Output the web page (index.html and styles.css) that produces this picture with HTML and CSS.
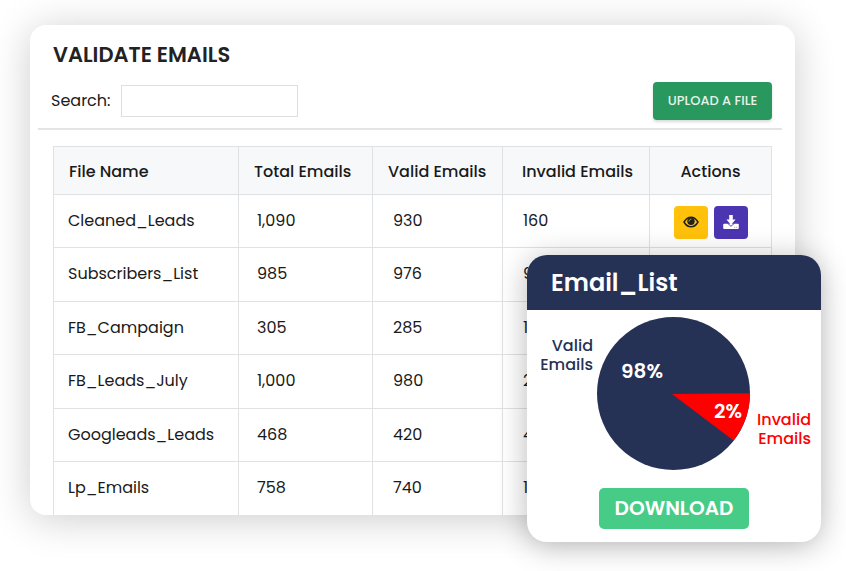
FILE: index.html
```html
<!DOCTYPE html>
<html lang="en">
<head>
    <meta charset="UTF-8">
    <meta name="viewport" content="width=device-width, initial-scale=1.0">
    <title>Validate Emails</title>
    <link rel="stylesheet" href="styles.css">
</head>
<body>
    <div class="dashboard">
        <main class="card">
            <div class="card-header">
                <h1>VALIDATE EMAILS</h1>
                <div class="toolbar">
                    <label for="search">Search:</label>
                    <input type="text" id="search" class="search-input">
                    <button class="upload-button">UPLOAD A FILE</button>
                </div>
            </div>

            <table class="email-table">
                <colgroup>
                    <col class="col-name">
                    <col class="col-total">
                    <col class="col-valid">
                    <col class="col-invalid">
                    <col>
                </colgroup>
                <thead>
                    <tr>
                        <th>File Name</th>
                        <th>Total Emails</th>
                        <th>Valid Emails</th>
                        <th>Invalid Emails</th>
                        <th>Actions</th>
                    </tr>
                </thead>
                <tbody>
                    <tr>
                        <td>Cleaned_Leads</td>
                        <td>1,090</td>
                        <td>930</td>
                        <td>160</td>
                        <td>
                            <div class="actions">
                                <button class="icon-button view-button" aria-label="View">
                                    <svg width="16" height="12" viewBox="0 0 16 12">
                                        <path d="M1 6C3 2.6 5.400 1.200 8 1.200S13 2.600 15 6C13 9.400 10.600 10.800 8 10.800S3 9.400 1 6Z" fill="none" stroke="#212121" stroke-width="1.500"/>
                                        <circle cx="8" cy="5.300" r="3.700" fill="#212121"/>
                                        <path d="M6 5.200C6 4.100 6.900 3.200 8 3.200" fill="none" stroke="#ffc10a" stroke-width="0.800" stroke-linecap="round"/>
                                    </svg>
                                </button>
                                <button class="icon-button save-button" aria-label="Download">
                                    <svg width="16" height="14" viewBox="0 0 16 14">
                                        <path d="M1.200 8.800H14.800Q15.800 8.800 15.800 9.800V13Q15.800 14 14.800 14H1.200Q0.200 14 0.200 13V9.800Q0.200 8.800 1.200 8.800Z" fill="#fff"/>
                                        <path d="M6.200 0H9.800V4.500H12.600L8 9.800L3.400 4.500H6.200Z" fill="#fff"/>
                                        <path d="M4.600 8.300L8 11.300L11.400 8.300" fill="none" stroke="#4c35b0" stroke-width="0.900"/>
                                        <path d="M11.400 12.300H12.200M13.400 12.300H14.200" stroke="#4c35b0" stroke-width="0.700"/>
                                    </svg>
                                </button>
                            </div>
                        </td>
                    </tr>
                    <tr>
                        <td>Subscribers_List</td>
                        <td>985</td>
                        <td>976</td>
                        <td>9</td>
                        <td></td>
                    </tr>
                    <tr>
                        <td>FB_Campaign</td>
                        <td>305</td>
                        <td>285</td>
                        <td>1</td>
                        <td></td>
                    </tr>
                    <tr>
                        <td>FB_Leads_July</td>
                        <td>1,000</td>
                        <td>980</td>
                        <td>2</td>
                        <td></td>
                    </tr>
                    <tr>
                        <td>Googleads_Leads</td>
                        <td>468</td>
                        <td>420</td>
                        <td>4</td>
                        <td></td>
                    </tr>
                    <tr>
                        <td>Lp_Emails</td>
                        <td>758</td>
                        <td>740</td>
                        <td>1</td>
                        <td></td>
                    </tr>
                </tbody>
            </table>
        </main>

        <!-- Result popup over the table -->
        <section class="popup">
            <h2>Email_List</h2>
            <div class="chart">
                <div class="chart-label valid-label">Valid Emails</div>
                <svg class="pie" width="153" height="153" viewBox="0 0 153 153">
                    <circle cx="76.500" cy="76.500" r="76.500" fill="#263255"/>
                    <path d="M75 77L153 76.300A76.500 76.500 0 0 1 136.500 123.500Z" fill="#ff0000"/>
                    <text x="24" y="61">98%</text>
                    <text x="117" y="101">2%</text>
                </svg>
                <div class="chart-label invalid-label">Invalid Emails</div>
            </div>
            <button class="download-button">DOWNLOAD</button>
        </section>
    </div>
</body>
</html>
```

FILE: styles.css
```css
* {
    box-sizing: border-box;
}
body {
    margin: 0;
    padding: 25px 51px 56px 30px;
    font-family: 'Poppins', 'Inter', sans-serif;
    font-size: 16px;
    line-height: 24px;
    background: #fff;
    color: #1a1a1a;
}
button {
    font-family: inherit;
    border: none;
    cursor: pointer;
}
.dashboard {
    position: relative;
}
.card {
    background: #fff;
    border-radius: 16px;
    box-shadow: 0 4px 40px rgba(0, 0, 0, 0.2);
    padding: 0 13px 0 8px;
    overflow: hidden;
}
.card-header {
    padding: 14px 10px 8px 13px;
    border-bottom: 2px solid #e3e4e5;
}
.card-header h1 {
    margin: 0;
    padding-left: 2px;
    font-size: 21px;
    font-weight: 600;
    line-height: 32px;
    color: #222;
}
.toolbar {
    display: flex;
    align-items: center;
    margin-top: 11px;
}
.toolbar label {
    width: 70px;
}
.search-input {
    width: 177px;
    height: 32px;
    border: 1px solid #dcdedf;
    background: #fff;
    padding: 0 8px;
    font-family: inherit;
    font-size: 16px;
}
.upload-button {
    margin-left: auto;
    width: 119px;
    height: 38px;
    padding: 0;
    border-radius: 4px;
    background: #28985f;
    color: #e4f4ea;
    font-size: 13px;
    font-weight: 500;
    box-shadow: 0 2px 3px rgba(0, 0, 0, 0.15);
}
.email-table {
    width: calc(100% - 25px);
    margin: 16px 10px 0 15px;
    border-collapse: collapse;
    table-layout: fixed;
    border: 1px solid #dfe1e3;
    border-bottom: none;
}
.col-name {
    width: 185px;
}
.col-total {
    width: 134px;
}
.col-valid {
    width: 130px;
}
.col-invalid {
    width: 147px;
}
.email-table th, .email-table td {
    border: 1px solid #dfe1e3;
    text-align: left;
    white-space: nowrap;
}
.email-table th {
    height: 48px;
    padding: 2px 0 0 15px;
    background: #f6f8fa;
    font-weight: 500;
}
.email-table th:nth-child(4) {
    padding-left: 19px;
}
.email-table th:last-child {
    padding-left: 0;
    text-align: center;
}
.email-table td {
    height: 53px;
    padding: 0 0 1px 20px;
}
.email-table tr:nth-child(2) td, .email-table tr:nth-child(4) td {
    height: 54px;
}
.email-table td:first-child {
    padding-left: 14px;
}
.email-table td:nth-child(2) {
    padding-left: 18px;
}
.email-table td:last-child {
    padding: 0;
}
.email-table tbody tr:last-child td {
    border-bottom: none;
}
.actions {
    display: flex;
    justify-content: center;
    gap: 6px;
    padding-top: 2px;
}
.icon-button {
    display: flex;
    align-items: center;
    justify-content: center;
    width: 34px;
    height: 33px;
    padding: 0;
    border-radius: 4px;
}
.view-button {
    background: #ffc10a;
}
.save-button {
    background: #4c35b0;
}
.popup {
    position: absolute;
    right: -26px;
    bottom: -27px;
    width: 294px;
    padding-bottom: 13px;
    background: #fff;
    border-radius: 20px;
    box-shadow: 0 4px 30px rgba(0, 0, 0, 0.28);
    overflow: hidden;
}
.popup h2 {
    margin: 0;
    padding: 0 24px;
    background: #263255;
    color: #fff;
    font-size: 24px;
    font-weight: 600;
    line-height: 55px;
}
.chart {
    display: flex;
    gap: 4px;
    padding: 7px 10px 0 12px;
}
.chart-label {
    width: 54px;
    font-size: 16px;
    font-weight: 500;
    line-height: 19px;
    text-align: right;
}
.valid-label {
    margin-top: 19px;
    color: #263255;
}
.invalid-label {
    margin-top: 93px;
    margin-left: auto;
    color: #ff0000;
}
.pie {
    flex: none;
}
.pie text {
    fill: #fff;
    font-size: 20px;
    font-weight: 600;
}
.download-button {
    display: block;
    width: 150px;
    height: 41px;
    margin: 18px auto 0;
    padding: 0;
    border-radius: 5px;
    background: #47cc88;
    color: #fff;
    font-size: 20px;
    font-weight: 600;
}
```
